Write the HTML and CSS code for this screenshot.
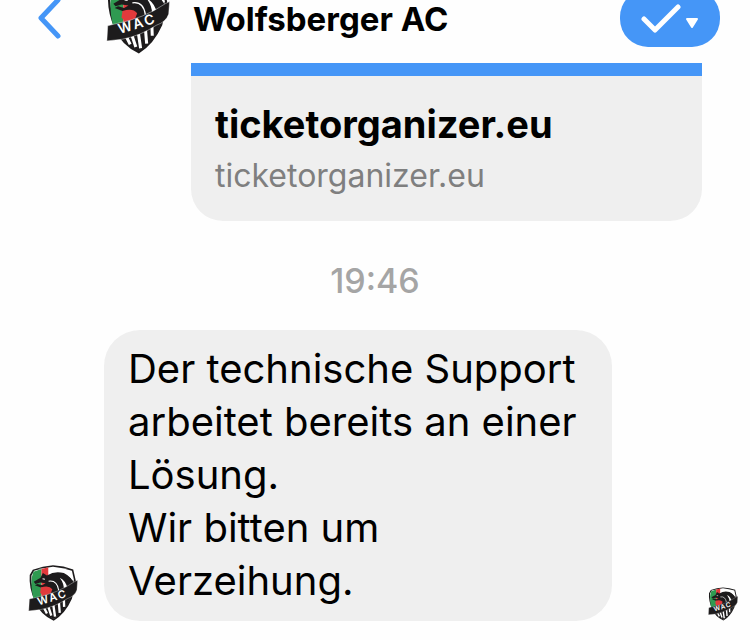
FILE: index.html
```
<!DOCTYPE html>
<html lang="de">
<head>
  <meta charset="UTF-8">
  <meta name="viewport" content="width=device-width, initial-scale=1.0">
  <title>Wolfsberger AC</title>
  <link rel="stylesheet" href="styles.css">
</head>
<body>

<!-- club crest, used three times below -->
<svg class="sprite" aria-hidden="true">
  <symbol id="wappen" viewBox="0 0 148 166">
    <path fill="#1d1b1c" d="M14 14Q44 3 74 1Q106 3 134 13L142 48L130 100Q110 145 76 165Q36 147 20 108Q2 66 5 30Z"/>
    <path fill="#fff" d="M18 17Q45 8 74 5Q104 8 130 17L136 44L124 100Q106 138 76 159Q42 142 26 108Q8 66 10 32Z"/>
    <path fill="#2f9a51" d="M16 20L40 12V98L16 100Q7 62 12 34Z"/>
    <path fill="#e23a3c" d="M40 12L60 7V90L40 94Z"/>
    <path fill="#1d1b1c" d="M17 50L37 38L44 24L56 31Q80 16 106 24Q130 36 137 56L118 72Q112 46 94 38Q108 56 106 76L66 90Q68 73 60 68L38 67L20 60L28 56L42 60L52 54L36 52L22 56Z"/>
    <path fill="#fff" d="M85 12L116 20L130 34L132 45Q116 20 85 12Z"/>
    <path fill="none" stroke="#fff" stroke-width="3" d="M61 48Q86 44 91 75M43 41L50 42"/>
    <path fill="#e23a3c" d="M38 67Q62 59 72 72L66 88L45 92L36 82Z"/>
    <path fill="#1d1b1c" d="M26 112L122 80L128 94Q108 140 76 160Q43 145 26 112Z"/>
    <path fill="none" stroke="#fff" stroke-width="7" d="M46 124L56 144M59 120L69 150M74 112L80 153M91 106L94 142M106 98L107 124"/>
    <path fill="#1d1b1c" stroke="#fff" stroke-width="1" d="M4 101L20 97Q88 84 137 50L147 45L145 74Q139 92 116 100Q80 124 38 132L2 136Z"/>
    <text class="wappen-text" transform="translate(32 120) rotate(-17)">WAC</text>
  </symbol>
</svg>

<header class="kopf">
  <a class="zurueck" href="#" aria-label="Zurück">
    <svg width="26" height="44" viewBox="0 0 26 44"><path d="M22 4L5 22L22 40"/></svg>
  </a>
  <svg class="wappen-kopf" role="img" aria-label="Wolfsberger AC"><use href="#wappen"/></svg>
  <h1>Wolfsberger AC</h1>
  <button class="erledigt" type="button" aria-label="Erledigt">
    <svg width="60" height="30" viewBox="0 0 60 30">
      <path class="haken" d="M4 16L15 27L38 4"/>
      <path class="pfeil" d="M47 16H57L52 24Z"/>
    </svg>
  </button>
</header>

<main>
  <a class="vorschau" href="#">
    <strong>ticketorganizer.eu</strong>
    <span>ticketorganizer.eu</span>
  </a>

  <time class="uhrzeit">19:46</time>

  <div class="nachricht">
    <svg class="wappen-chat" role="img" aria-label="Wolfsberger AC"><use href="#wappen"/></svg>
    <p class="blase">Der technische Support arbeitet bereits an einer Lösung.<br>Wir bitten um Verzeihung.</p>
    <svg class="wappen-gelesen" role="img" aria-label="Gelesen"><use href="#wappen"/></svg>
  </div>
</main>

</body>
</html>
```
FILE: styles.css
```
body {
  margin: 0;
  font-family: Inter, "Liberation Sans", sans-serif;
  background-color: #fefefe;
  color: black;
  overflow: hidden;
}

.sprite {
  position: absolute;
  width: 0;
  height: 0;
}

.wappen-text {
  font-family: Inter, Arial, sans-serif;
  font-size: 32px;
  font-weight: 600;
  letter-spacing: 5px;
  fill: white;
}

/* the bar is partly scrolled out at the top */
.kopf {
  display: flex;
  align-items: center;
  height: 90px;
  margin-top: -27px;
  padding: 0 30px 0 36px;
}

.zurueck {
  display: flex;
  margin-right: 44px;
}

.zurueck path {
  fill: none;
  stroke: #4596f7;
  stroke-width: 5;
  stroke-linecap: round;
  stroke-linejoin: round;
}

.wappen-kopf {
  width: 64px;
  height: 72px;
  margin-right: 23px;
}

.kopf h1 {
  margin: 0;
  padding-top: 2px;
  font-size: 33px;
  font-weight: 700;
}

.erledigt {
  display: flex;
  align-items: center;
  justify-content: center;
  width: 100px;
  height: 58px;
  margin-left: auto;
  padding: 0;
  border: none;
  border-radius: 28px;
  background-color: #4596f7;
}

.haken {
  fill: none;
  stroke: white;
  stroke-width: 5;
  stroke-linecap: round;
  stroke-linejoin: round;
}

.pfeil {
  fill: white;
  stroke: white;
  stroke-width: 2;
  stroke-linejoin: round;
}

.vorschau {
  display: flex;
  flex-direction: column;
  margin: 0 48px 0 191px;
  padding: 23px 24px 19px;
  border-top: 13px solid #4596f7;
  border-radius: 0 0 32px 32px;
  background-color: #efefef;
  color: black;
  text-decoration: none;
}

.vorschau strong {
  font-size: 38px;
  font-weight: 700;
  line-height: 50px;
}

.vorschau span {
  color: #7f7f7f;
  font-size: 32px;
  line-height: 53px;
}

.uhrzeit {
  display: block;
  padding: 36px 0 25px;
  color: #a5a5a5;
  font-size: 34px;
  font-weight: 500;
  line-height: 48px;
  text-align: center;
}

.nachricht {
  display: flex;
  align-items: flex-end;
  padding: 0 12px 0 28px;
}

.blase {
  flex: 1;
  margin: 0 96px 0 26px;
  padding: 12px 24px 14px;
  border-radius: 36px;
  background-color: #efefef;
  font-size: 40px;
  line-height: 53px;
}

.wappen-chat {
  width: 50px;
  height: 56px;
}

.wappen-gelesen {
  width: 30px;
  height: 34px;
}
```
